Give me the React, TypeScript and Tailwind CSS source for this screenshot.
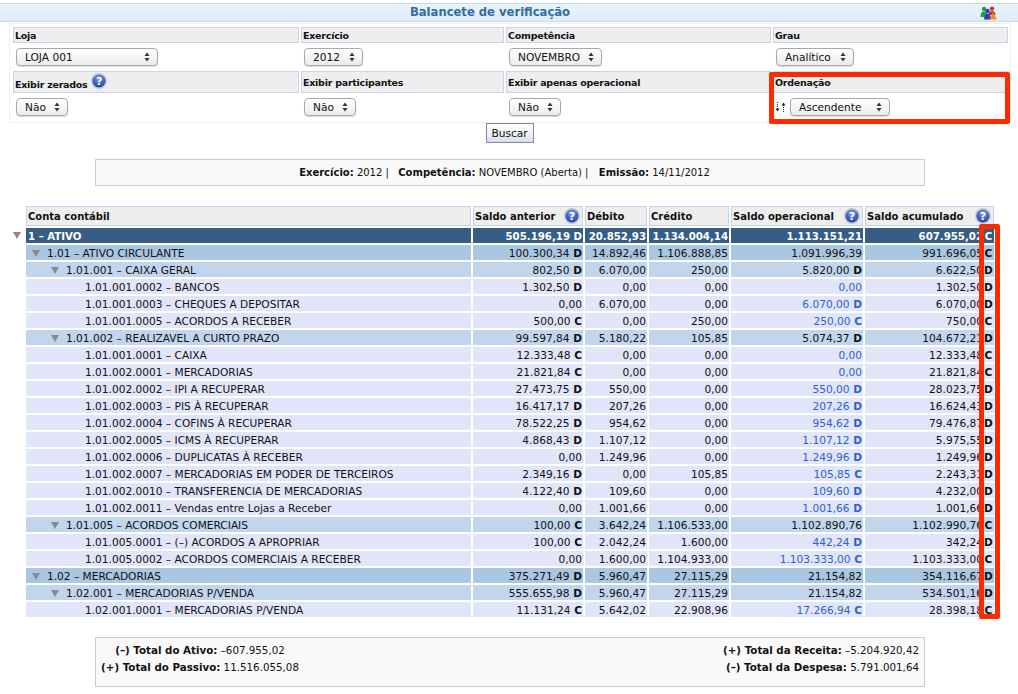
import React from "react";

type Row = { l: number; name: string; a: string; as?: string; d: string; c: string; o: string; os?: string; t: string; ts: string };

const rows: Row[] = [
  { l: 0, name: "1 – ATIVO", a: "505.196,19", as: "D", d: "20.852,93", c: "1.134.004,14", o: "1.113.151,21", t: "607.955,02", ts: "C" },
  { l: 1, name: "1.01 – ATIVO CIRCULANTE", a: "100.300,34", as: "D", d: "14.892,46", c: "1.106.888,85", o: "1.091.996,39", t: "991.696,05", ts: "C" },
  { l: 2, name: "1.01.001 – CAIXA GERAL", a: "802,50", as: "D", d: "6.070,00", c: "250,00", o: "5.820,00", os: "D", t: "6.622,50", ts: "D" },
  { l: 3, name: "1.01.001.0002 – BANCOS", a: "1.302,50", as: "D", d: "0,00", c: "0,00", o: "0,00", t: "1.302,50", ts: "D" },
  { l: 3, name: "1.01.001.0003 – CHEQUES A DEPOSITAR", a: "0,00", d: "6.070,00", c: "0,00", o: "6.070,00", os: "D", t: "6.070,00", ts: "D" },
  { l: 3, name: "1.01.001.0005 – ACORDOS A RECEBER", a: "500,00", as: "C", d: "0,00", c: "250,00", o: "250,00", os: "C", t: "750,00", ts: "C" },
  { l: 2, name: "1.01.002 – REALIZAVEL A CURTO PRAZO", a: "99.597,84", as: "D", d: "5.180,22", c: "105,85", o: "5.074,37", os: "D", t: "104.672,21", ts: "D" },
  { l: 3, name: "1.01.001.0001 – CAIXA", a: "12.333,48", as: "C", d: "0,00", c: "0,00", o: "0,00", t: "12.333,48", ts: "C" },
  { l: 3, name: "1.01.002.0001 – MERCADORIAS", a: "21.821,84", as: "C", d: "0,00", c: "0,00", o: "0,00", t: "21.821,84", ts: "C" },
  { l: 3, name: "1.01.002.0002 – IPI A RECUPERAR", a: "27.473,75", as: "D", d: "550,00", c: "0,00", o: "550,00", os: "D", t: "28.023,75", ts: "D" },
  { l: 3, name: "1.01.002.0003 – PIS À RECUPERAR", a: "16.417,17", as: "D", d: "207,26", c: "0,00", o: "207,26", os: "D", t: "16.624,43", ts: "D" },
  { l: 3, name: "1.01.002.0004 – COFINS À RECUPERAR", a: "78.522,25", as: "D", d: "954,62", c: "0,00", o: "954,62", os: "D", t: "79.476,87", ts: "D" },
  { l: 3, name: "1.01.002.0005 – ICMS À RECUPERAR", a: "4.868,43", as: "D", d: "1.107,12", c: "0,00", o: "1.107,12", os: "D", t: "5.975,55", ts: "D" },
  { l: 3, name: "1.01.002.0006 – DUPLICATAS À RECEBER", a: "0,00", d: "1.249,96", c: "0,00", o: "1.249,96", os: "D", t: "1.249,96", ts: "D" },
  { l: 3, name: "1.01.002.0007 – MERCADORIAS EM PODER DE TERCEIROS", a: "2.349,16", as: "D", d: "0,00", c: "105,85", o: "105,85", os: "C", t: "2.243,31", ts: "D" },
  { l: 3, name: "1.01.002.0010 – TRANSFERENCIA DE MERCADORIAS", a: "4.122,40", as: "D", d: "109,60", c: "0,00", o: "109,60", os: "D", t: "4.232,00", ts: "D" },
  { l: 3, name: "1.01.002.0011 – Vendas entre Lojas a Receber", a: "0,00", d: "1.001,66", c: "0,00", o: "1.001,66", os: "D", t: "1.001,66", ts: "D" },
  { l: 2, name: "1.01.005 – ACORDOS COMERCIAIS", a: "100,00", as: "C", d: "3.642,24", c: "1.106.533,00", o: "1.102.890,76", t: "1.102.990,76", ts: "C" },
  { l: 3, name: "1.01.005.0001 – (–) ACORDOS A APROPRIAR", a: "100,00", as: "C", d: "2.042,24", c: "1.600,00", o: "442,24", os: "D", t: "342,24", ts: "D" },
  { l: 3, name: "1.01.005.0002 – ACORDOS COMERCIAIS A RECEBER", a: "0,00", d: "1.600,00", c: "1.104.933,00", o: "1.103.333,00", os: "C", t: "1.103.333,00", ts: "C" },
  { l: 1, name: "1.02 – MERCADORIAS", a: "375.271,49", as: "D", d: "5.960,47", c: "27.115,29", o: "21.154,82", t: "354.116,67", ts: "D" },
  { l: 2, name: "1.02.001 – MERCADORIAS P/VENDA", a: "555.655,98", as: "D", d: "5.960,47", c: "27.115,29", o: "21.154,82", t: "534.501,16", ts: "D" },
  { l: 3, name: "1.02.001.0001 – MERCADORIAS P/VENDA", a: "11.131,24", as: "C", d: "5.642,02", c: "22.908,96", o: "17.266,94", os: "C", t: "28.398,18", ts: "C" },
];

const rowBg = ["bg-[#365d85] text-white font-bold text-[10.2px]", "bg-[#a9c6e3]", "bg-[#c1d5ed]", "bg-[#e0e5f9]"];

function Help() {
  return (
    <svg width="16" height="16" viewBox="0 0 16 16" className="shrink-0">
      <defs>
        <radialGradient id="helpGrad" cx="50%" cy="30%" r="70%">
          <stop offset="0%" stopColor="#7fa0ec" />
          <stop offset="100%" stopColor="#1c3fa8" />
        </radialGradient>
      </defs>
      <circle cx="8" cy="8" r="8" fill="#c3c8d2" />
      <circle cx="8" cy="8" r="6.5" fill="url(#helpGrad)" />
      <text x="8" y="11.8" textAnchor="middle" fontSize="11" fontWeight="700" fill="#fff" fontFamily="DejaVu Sans, sans-serif">?</text>
    </svg>
  );
}

function Triangle() {
  return (
    <svg width="8" height="7" viewBox="0 0 8 7" className="shrink-0">
      <path d="M0 0H8L4 7Z" fill="#8a8a8a" />
    </svg>
  );
}

function Select({ w, label }: { w: string; label: string }) {
  return (
    <div className={`${w} h-[18px] flex items-center justify-between pl-[8px] pr-[7px] rounded-[4px] border border-[#a8a8a8] bg-linear-to-b from-white to-[#ececec] shadow-[0_1px_1px_rgba(0,0,0,0.15)] text-[#111]`}>
      <span>{label}</span>
      <svg width="6" height="10" viewBox="0 0 6 10">
        <path d="M3 0.5L5.5 4H0.5Z M3 9.5L0.5 6H5.5Z" fill="#333" />
      </svg>
    </div>
  );
}

function Label({ children, tall }: { children: React.ReactNode; tall?: boolean }) {
  return (
    <div className={`${tall ? "h-[22px]" : "h-[16px]"} flex items-center pl-[1px] bg-[#eeeeee] border border-[#c5d3ee] font-bold text-[9.5px] tracking-[-0.25px] text-[#111]`}>
      {children}
    </div>
  );
}

function Val({ v, s }: { v: string; s?: string }) {
  return (
    <>
      {v}
      {s ? <b> {s}</b> : null}
    </>
  );
}

function Th({ children, help }: { children: React.ReactNode; help?: boolean }) {
  return (
    <th className="p-0 h-[20px] bg-[#eeeeee] border border-[#c5d3ee] font-bold text-left text-[10px] text-[#111]">
      <div className="flex items-center justify-between pl-[1px] pr-[2px]">
        <span>{children}</span>
        {help ? <Help /> : null}
      </div>
    </th>
  );
}

export default function App() {
  return (
    <div className="relative w-[1018px] h-[694px] overflow-hidden bg-white pt-[3px] text-[10.6px] leading-[15px] text-[#111] font-['DejaVu_Sans',sans-serif]">
      <div className="h-[19px] flex items-center justify-between border-y border-[#c5d9f0] bg-linear-to-b from-[#eaf4fd] to-[#deecf9] pr-[21px]">
        <div className="w-[980px] text-center font-bold text-[11.6px] text-[#2f6da3]">Balancete de verificação</div>
        <svg width="17" height="14" viewBox="0 0 17 14">
          <circle cx="4" cy="3" r="2.2" fill="#2e9b3a" />
          <path d="M0.5 11C0.5 7 2 5.5 4 5.5S7.5 7 7.5 11Z" fill="#2e9b3a" />
          <circle cx="12" cy="2.6" r="2.2" fill="#c8322c" />
          <path d="M8.5 9C8.5 6 10 5 12 5S15.5 6 15.5 9Z" fill="#c8322c" />
          <circle cx="7.5" cy="5" r="2.2" fill="#2b3fb5" />
          <path d="M4 13.5C4 9.5 5.5 7.5 7.5 7.5S11 9.5 11 13.5Z" fill="#2b3fb5" />
          <path d="M13 6L16.8 13.5H9.5Z" fill="#f28c1c" />
        </svg>
      </div>

      <div className="ml-[9px] mt-[1px] w-[1002px] h-[100px] border border-[#eeeeee] pl-[3px] pr-[2px] pt-[3px] grid grid-cols-[286px_203px_265px_235px] gap-x-[2px] grid-rows-[16px_28px_22px_29px]">
        <Label>Loja</Label>
        <Label>Exercício</Label>
        <Label>Competência</Label>
        <Label>Grau</Label>
        <div className="pl-[3px] pt-[5px]"><Select w="w-[142px]" label="LOJA 001" /></div>
        <div className="pl-[3px] pt-[5px]"><Select w="w-[59px]" label="2012" /></div>
        <div className="pl-[3px] pt-[5px]"><Select w="w-[93px]" label="NOVEMBRO" /></div>
        <div className="pl-[3px] pt-[5px]"><Select w="w-[78px]" label="Analítico" /></div>
        <Label tall>
          <span className="mt-[5px]">Exibir zerados</span>
          <span className="ml-[4px] -mt-[3px]"><Help /></span>
        </Label>
        <Label tall>Exibir participantes</Label>
        <Label tall>Exibir apenas operacional</Label>
        <Label tall>Ordenação</Label>
        <div className="pl-[3px] pt-[5px]"><Select w="w-[52px]" label="Não" /></div>
        <div className="pl-[3px] pt-[5px]"><Select w="w-[52px]" label="Não" /></div>
        <div className="pl-[3px] pt-[5px]"><Select w="w-[52px]" label="Não" /></div>
        <div className="flex items-start gap-[4px] pl-[2px] pt-[5px]">
          <svg width="11" height="12" viewBox="0 0 11 12" className="mt-[3px]">
            <path d="M2.5 1V8" stroke="#223" strokeWidth="1" strokeDasharray="1 1" />
            <path d="M0.5 7.5H4.5L2.5 10.5Z" fill="#223" />
            <path d="M8.5 11V4" stroke="#223" strokeWidth="1" strokeDasharray="1 1" />
            <path d="M6.5 4.5H10.5L8.5 1.5Z" fill="#223" />
          </svg>
          <Select w="w-[100px]" label="Ascendente" />
        </div>
      </div>

      <div className="flex justify-center pl-[1px]">
        <div className="w-[48px] h-[20px] flex items-center justify-center border border-[#8088a8] bg-linear-to-b from-white via-[#f2f2f2] to-[#d8dde8] text-[#111]">Buscar</div>
      </div>

      <div className="ml-[95px] mt-[16px] w-[830px] h-[27px] flex items-center justify-center pr-[11px] border border-[#cccccc] bg-[#f9f9f9] whitespace-pre text-[10px]">
        <span><b>Exercício:</b> 2012 |  <b className="ml-[3px]">Competência:</b> NOVEMBRO (Aberta) |  <b className="ml-[4px]">Emissão:</b> 14/11/2012</span>
      </div>

      <table className="ml-[8px] mt-[18px] w-[988px] table-fixed border-separate border-spacing-[2px]">
        <colgroup>
          <col className="w-[14px]" />
          <col className="w-[445px]" />
          <col className="w-[110px]" />
          <col className="w-[62px]" />
          <col className="w-[80px]" />
          <col className="w-[132px]" />
          <col className="w-[129px]" />
        </colgroup>
        <thead>
          <tr>
            <th className="p-0" />
            <Th>Conta contábil</Th>
            <Th help>Saldo anterior</Th>
            <Th>Débito</Th>
            <Th>Crédito</Th>
            <Th help>Saldo operacional</Th>
            <Th help>Saldo acumulado</Th>
          </tr>
        </thead>
        <tbody>
          {rows.map((r) => {
            const bg = rowBg[r.l];
            const cell = `${bg} p-0 pt-[2px] h-[15px] leading-[13px] whitespace-nowrap`;
            const num = `${cell} text-right pr-[1px]`;
            const leafBlue = r.l === 3 ? "text-[#2f62c9]" : "";
            return (
              <tr key={r.name}>
                <td className="p-0 h-[15px]">
                  {r.l === 0 ? <div className="flex justify-end pr-[3px]"><Triangle /></div> : null}
                </td>
                <td className={cell}>
                  <div className={`flex items-center ${r.l === 0 ? "pl-[2px]" : r.l === 1 ? "pl-[6px] gap-[7px]" : r.l === 2 ? "pl-[25px] gap-[7px]" : "pl-[59px]"}`}>
                    {r.l === 1 || r.l === 2 ? <Triangle /> : null}
                    <span>{r.name}</span>
                  </div>
                </td>
                <td className={num}><Val v={r.a} s={r.as} /></td>
                <td className={num}>{r.d}</td>
                <td className={num}>{r.c}</td>
                <td className={`${num} ${leafBlue}`}><Val v={r.o} s={r.os} /></td>
                <td className={cell}>
                  <div className="flex justify-end items-center">
                    <span>{r.t}</span>
                    <b className="w-[11px] text-center">{r.ts}</b>
                  </div>
                </td>
              </tr>
            );
          })}
        </tbody>
      </table>

      <div className="ml-[95px] mt-[18px] w-[830px] h-[50px] border border-[#cccccc] bg-[#f9f9f9] flex justify-between pt-[4px] pr-[5px] leading-[17px] text-[10.3px]">
        <div className="w-[208px] text-center">
          <div><b>(–) Total do Ativo:</b> –607.955,02</div>
          <div><b>(+) Total do Passivo:</b> 11.516.055,08</div>
        </div>
        <div className="text-right">
          <div><b>(+) Total da Receita:</b> –5.204.920,42</div>
          <div><b>(–) Total da Despesa:</b> 5.791.001,64</div>
        </div>
      </div>

      <div className="absolute left-[769px] top-[72px] w-[241px] h-[52px] border-[5px] border-[#ff2a00] rounded-[2px]" />
      <div className="absolute left-[979px] top-[224px] w-[21px] h-[395px] border-[5px] border-[#ff2a00] rounded-[2px]" />
    </div>
  );
}
